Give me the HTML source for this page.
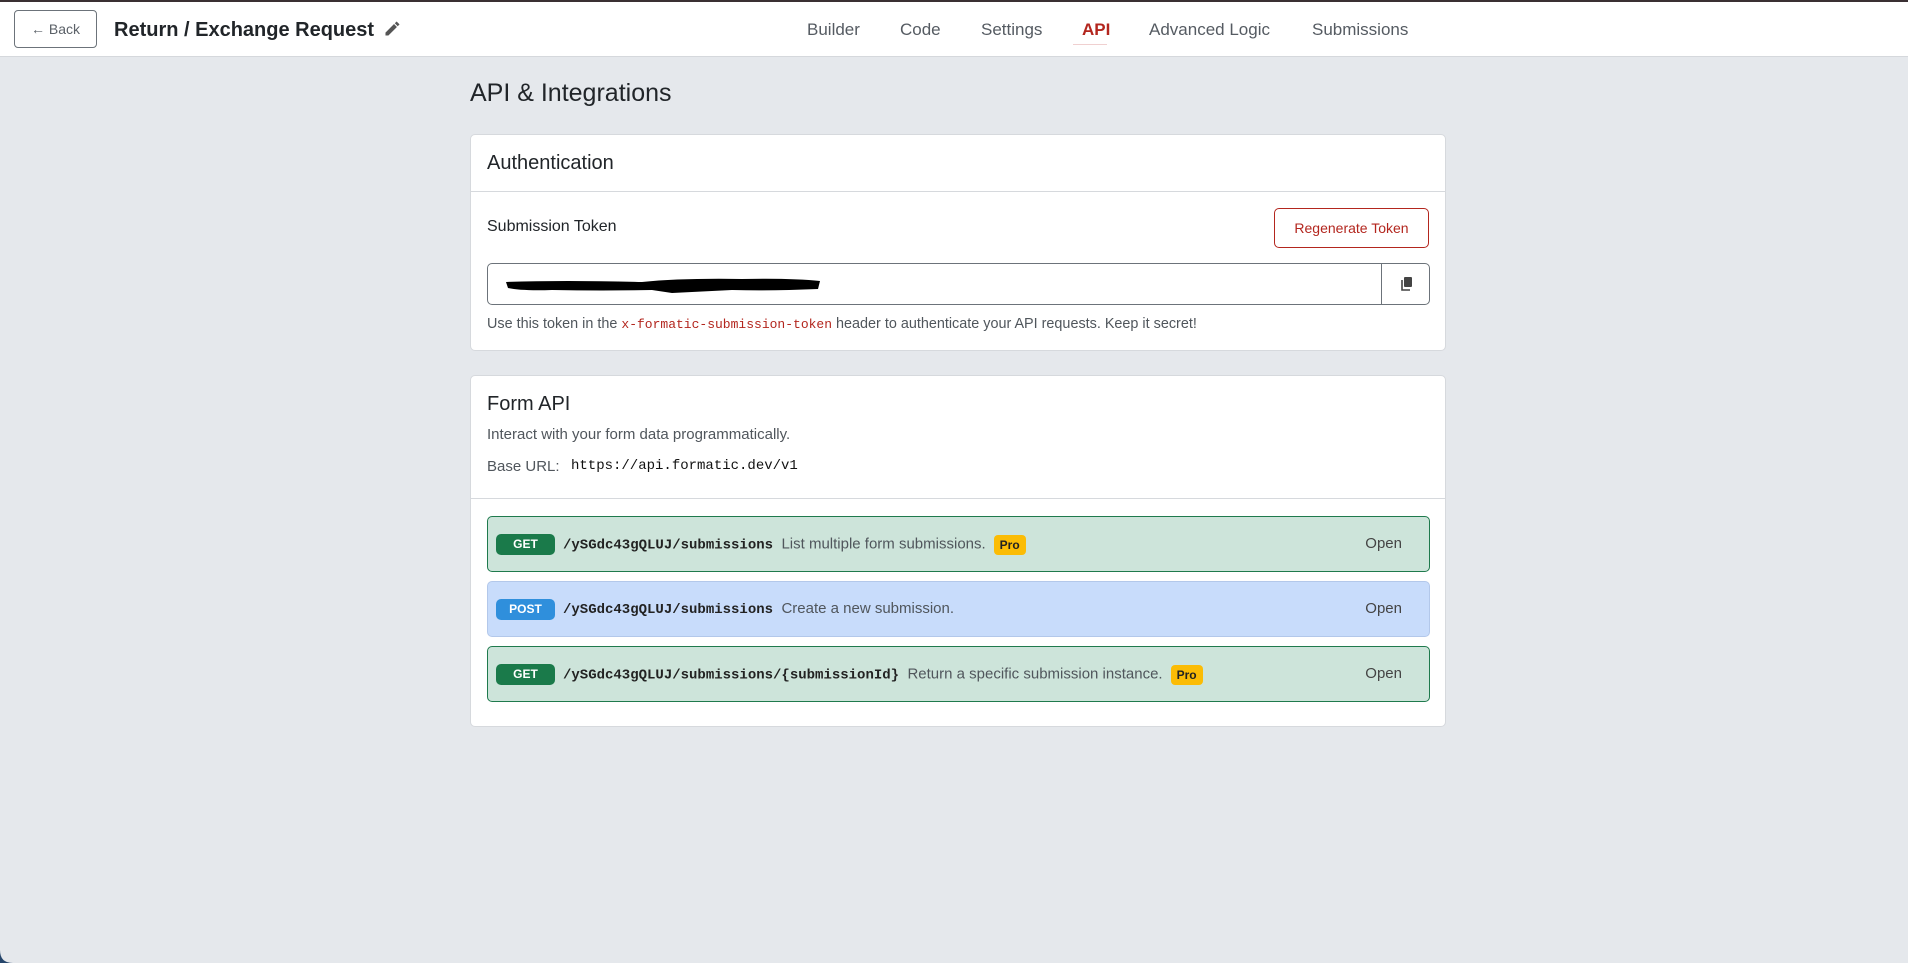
<!DOCTYPE html>
<html><head><meta charset="utf-8"><style>
*{box-sizing:border-box;margin:0;padding:0}
body{width:1908px;height:963px;background:#e5e8ec;font-family:"Liberation Sans",sans-serif;position:relative;overflow:hidden;color:#212529}
.a{position:absolute;white-space:nowrap}
.hdr{position:absolute;left:0;top:0;width:1908px;height:57px;background:#fff;border-top:2px solid #3a3033;border-bottom:1px solid #d5d8dc}
.nav{font-size:17px;color:#555b62;top:18px}
.card{position:absolute;left:470px;width:976px;background:#fff;border:1px solid #d6d9dd;border-radius:5px}
.row{position:absolute;left:16px;width:943px;height:56px;border-radius:5px}
.g{background:#cde4da;border:1px solid #1f7a4d}
.b{background:#c8dcfb;border:1px solid #b3c8ea}
.badge{position:absolute;left:8px;top:17px;width:59px;height:21px;border-radius:5px;color:#fff;font-size:12px;font-weight:bold;text-align:center;line-height:21px}
.path{position:absolute;left:75px;top:18px;font-family:"Liberation Mono",monospace;font-weight:bold;font-size:14px;color:#222}
.desc{font-size:15px;color:#50565c}
.pro{display:inline-block;background:#fbbc05;color:#222;font-size:12px;font-weight:bold;padding:0 6px;height:20px;line-height:20px;border-radius:4px;margin-left:8px;vertical-align:middle}
.open{position:absolute;right:27px;top:18px;font-size:15px;color:#444}
</style></head><body>
<div class="hdr">
 <div class="a" style="left:14px;top:8px;width:83px;height:38px;border:1px solid #6c737a;border-radius:4px;font-size:14px;color:#5b6168;line-height:36px;text-align:center">← Back</div>
 <div class="a" style="left:114px;top:17px;font-size:20px;font-weight:bold;color:#212529">Return / Exchange Request</div>
 <svg class="a" style="left:383px;top:18px" width="18" height="18" viewBox="0 0 16 16"><path fill="#555" d="M12.1 1.3l2.6 2.6-1.6 1.6-2.6-2.6zM9.8 3.6l2.6 2.6-7.6 7.6H2.2v-2.6z"/></svg>
 <div class="a nav" style="left:807px">Builder</div>
 <div class="a nav" style="left:900px">Code</div>
 <div class="a nav" style="left:981px">Settings</div>
 <div class="a nav" style="left:1082px;color:#b3261e;font-weight:bold">API</div>
 <div class="a" style="left:1073px;top:42px;width:34px;height:1px;background:#f0d0d0"></div>
 <div class="a nav" style="left:1149px">Advanced Logic</div>
 <div class="a nav" style="left:1312px">Submissions</div>
</div>
<div class="a" style="left:470px;top:79px;font-size:25px;color:#212529">API &amp; Integrations</div>

<div class="card" style="top:134px;height:217px">
 <div class="a" style="left:16px;top:17px;font-size:20px">Authentication</div>
 <div class="a" style="left:0;top:56px;width:974px;height:1px;background:#d6d9dd"></div>
 <div class="a" style="left:16px;top:83px;font-size:16px">Submission Token</div>
 <div class="a" style="left:803px;top:73px;width:155px;height:40px;border:1px solid #b3261e;border-radius:5px;color:#b3261e;font-size:14px;text-align:center;line-height:38px">Regenerate Token</div>
 <div class="a" style="left:16px;top:128px;width:943px;height:42px;border:1px solid #6c737a;border-radius:5px">
  <svg class="a" style="left:14px;top:8px" width="320" height="26"><path d="M4 10 Q60 8 140 10 Q180 6 240 7 Q290 6 318 9 L316 17 Q270 19 230 18 L170 21 L150 18 Q100 19 50 18 Q20 19 6 16Z" fill="#000"/></svg>
  <div class="a" style="left:893px;top:0;width:1px;height:40px;background:#6c737a"></div>
  <svg class="a" style="left:912px;top:12px" width="14" height="16" viewBox="0 0 14 16"><rect x="4" y="1" width="8" height="10" rx="1" fill="#444"/><path d="M2 4v10h8" stroke="#444" stroke-width="1.6" fill="none"/></svg>
 </div>
 <div class="a" style="left:16px;top:181px;font-size:14.4px;color:#50565c">Use this token in the <span style="font-family:'Liberation Mono',monospace;color:#b3261e;font-size:13px">x-formatic-submission-token</span> header to authenticate your API requests. Keep it secret!</div>
</div>

<div class="card" style="top:375px;height:352px">
 <div class="a" style="left:16px;top:17px;font-size:20px">Form API</div>
 <div class="a" style="left:16px;top:50px;font-size:15px;color:#50565c">Interact with your form data programmatically.</div>
 <div class="a" style="left:16px;top:82px;font-size:15px;color:#50565c">Base URL:</div>
 <div class="a" style="left:100px;top:82px;font-size:14px;font-family:'Liberation Mono',monospace;color:#111">https://api.formatic.dev/v1</div>
 <div class="a" style="left:0;top:122px;width:974px;height:1px;background:#d6d9dd"></div>
 <div class="row g" style="top:140px"><div class="badge" style="background:#1a7a4a">GET</div><div class="path">/ySGdc43gQLUJ/submissions <span class="desc" style="font-family:'Liberation Sans',sans-serif;font-weight:normal">List multiple form submissions.</span><span class="pro" style="font-family:'Liberation Sans',sans-serif">Pro</span></div><div class="open">Open</div></div>
 <div class="row b" style="top:205px"><div class="badge" style="background:#2f8fdc">POST</div><div class="path">/ySGdc43gQLUJ/submissions <span class="desc" style="font-family:'Liberation Sans',sans-serif;font-weight:normal">Create a new submission.</span></div><div class="open">Open</div></div>
 <div class="row g" style="top:270px"><div class="badge" style="background:#1a7a4a">GET</div><div class="path">/ySGdc43gQLUJ/submissions/{submissionId} <span class="desc" style="font-family:'Liberation Sans',sans-serif;font-weight:normal">Return a specific submission instance.</span><span class="pro" style="font-family:'Liberation Sans',sans-serif">Pro</span></div><div class="open">Open</div></div>
</div>
<svg class="a" style="left:0;top:950px" width="14" height="13"><path d="M0 0 Q0 13 13 13 L0 13Z" fill="#26466b"/></svg>
</body></html>
